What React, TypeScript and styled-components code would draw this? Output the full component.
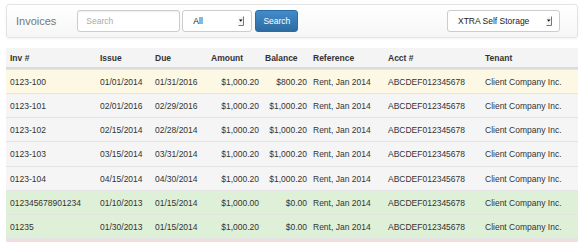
import React from 'react'
import styled, { createGlobalStyle } from 'styled-components'

const GlobalStyle = createGlobalStyle`
  html, body {
    margin: 0;
    padding: 0;
    background: #fff;
    font-family: "Liberation Sans", Arial, sans-serif;
    color: #333;
  }
`

const Page = styled.div`
  padding: 4px 7px 0 6px;
  width: 572px;
  height: 238px;
  overflow: hidden;
`

const Navbar = styled.div`
  height: 32px;
  display: flex;
  align-items: center;
  border: 1px solid #e3e3e3;
  border-radius: 3px;
  background: linear-gradient(to bottom, #ffffff 0%, #f6f6f6 100%);
  box-shadow: 0 1px 3px rgba(0, 0, 0, 0.05);
  padding: 0 17px 0 9px;
  margin-bottom: 10px;
`

const Brand = styled.div`
  font-size: 11px;
  color: #777;
  margin-right: 21px;
`

const SearchInput = styled.input`
  width: 103px;
  height: 22px;
  box-sizing: border-box;
  border: 1px solid #ccc;
  border-radius: 3px;
  padding: 0 8px;
  font-family: inherit;
  font-size: 8.5px;
  color: #555;
  box-shadow: inset 0 1px 1px rgba(0, 0, 0, 0.06);
  outline: none;
  &::placeholder {
    color: #aaa;
  }
`

const SelectBox = styled.div<{ $w: number; $ml: number }>`
  width: ${(p) => p.$w}px;
  height: 22px;
  margin-left: ${(p) => p.$ml}px;
  box-sizing: border-box;
  border: 1px solid #ccc;
  border-radius: 3px;
  background: #fff;
  display: flex;
  align-items: center;
  justify-content: space-between;
  padding: 0 7px 0 10px;
  font-size: 8.5px;
  color: #222;
`

const Arrow = () => (
  <svg width="6" height="10" viewBox="0 0 6 10">
    <rect x="0.5" y="0.5" width="5" height="9" fill="#f4f4f4" />
    <path d="M5.5 0.5 V9.5 H0.5" stroke="#777" strokeWidth="1" fill="none" />
    <path d="M1 3.5 H4.5 L2.75 5.8 Z" fill="#111" />
  </svg>
)

const Button = styled.button`
  height: 22px;
  width: 43px;
  margin-left: 3px;
  box-sizing: border-box;
  border: 1px solid #2d6ca2;
  border-radius: 3px;
  background: linear-gradient(to bottom, #428bca 0%, #2d6ca2 100%);
  color: #fff;
  font-family: inherit;
  font-size: 8.5px;
  padding: 0;
`

const Spacer = styled.div`
  flex: 1;
`

const cols = '90px 55px 56px 54px 48px 75px 97px 97px'

const HeadRow = styled.div`
  display: grid;
  grid-template-columns: ${cols};
  height: 19px;
  align-items: center;
  background: #f4f4f4;
  border-bottom: 2px solid #dcdcdc;
  font-weight: bold;
  font-size: 8.5px;
  color: #333;
`

const rowBg = {
  warning: '#fcf8e3',
  active: '#f5f5f5',
  success: '#dff0d8',
  danger: '#f2dede',
}

type Variant = keyof typeof rowBg

const Row = styled.div<{ $variant: Variant }>`
  display: grid;
  grid-template-columns: ${cols};
  height: 24.14px;
  box-sizing: border-box;
  align-items: center;
  background: ${(p) => rowBg[p.$variant]};
  border-top: 1px solid #e4e4e4;
  font-size: 8.5px;
  color: #333;
`

const Cell = styled.div<{ $right?: boolean }>`
  padding: 1px 2px 0 4px;
  text-align: ${(p) => (p.$right ? 'right' : 'left')};
  white-space: nowrap;
  overflow: hidden;
`

const headers = ['Inv #', 'Issue', 'Due', 'Amount', 'Balance', 'Reference', 'Acct #', 'Tenant']

const rows: { v: Variant; inv: string; issue: string; due: string; amt: string; bal: string }[] = [
  { v: 'warning', inv: '0123-100', issue: '01/01/2014', due: '01/31/2016', amt: '$1,000.20', bal: '$800.20' },
  { v: 'active', inv: '0123-101', issue: '02/01/2016', due: '02/29/2016', amt: '$1,000.20', bal: '$1,000.20' },
  { v: 'active', inv: '0123-102', issue: '02/15/2014', due: '02/28/2014', amt: '$1,000.20', bal: '$1,000.20' },
  { v: 'active', inv: '0123-103', issue: '03/15/2014', due: '03/31/2014', amt: '$1,000.20', bal: '$1,000.20' },
  { v: 'active', inv: '0123-104', issue: '04/15/2014', due: '04/30/2014', amt: '$1,000.20', bal: '$1,000.20' },
  { v: 'success', inv: '012345678901234', issue: '01/10/2013', due: '01/15/2014', amt: '$1,000.00', bal: '$0.00' },
  { v: 'success', inv: '01235', issue: '01/30/2013', due: '01/15/2014', amt: '$1,000.20', bal: '$0.00' },
]

export default function App() {
  return (
    <Page>
      <GlobalStyle />
      <Navbar>
        <Brand>Invoices</Brand>
        <SearchInput placeholder="Search" />
        <SelectBox $w={70} $ml={2}>
          <span>All</span>
          <Arrow />
        </SelectBox>
        <Button>Search</Button>
        <Spacer />
        <SelectBox $w={113} $ml={0}>
          <span>XTRA Self Storage</span>
          <Arrow />
        </SelectBox>
      </Navbar>
      <HeadRow>
        {headers.map((h) => (
          <Cell key={h}>{h}</Cell>
        ))}
      </HeadRow>
      {rows.map((r) => (
        <Row key={r.inv} $variant={r.v}>
          <Cell>{r.inv}</Cell>
          <Cell>{r.issue}</Cell>
          <Cell>{r.due}</Cell>
          <Cell $right>{r.amt}</Cell>
          <Cell $right>{r.bal}</Cell>
          <Cell>Rent, Jan 2014</Cell>
          <Cell>ABCDEF012345678</Cell>
          <Cell>Client Company Inc.</Cell>
        </Row>
      ))}
      <Row $variant="danger" />
    </Page>
  )
}
